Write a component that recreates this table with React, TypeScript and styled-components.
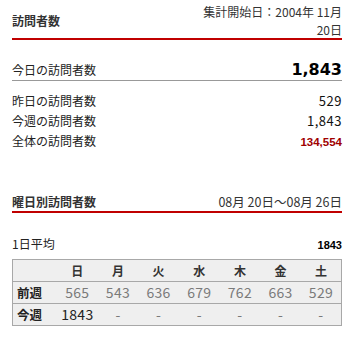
import React from "react";
import styled, { createGlobalStyle } from "styled-components";

const GlobalStyle = createGlobalStyle`
  html, body {
    margin: 0;
    padding: 0;
    background: #ffffff;
  }
  body {
    font-family: "Noto Sans CJK JP", "Noto Sans", sans-serif;
    color: #222;
  }
`;

const Page = styled.div`
  width: 330px;
  padding: 3px 8px 0 12px;
`;

const SectionHeader = styled.div<{ $top?: number }>`
  display: flex;
  justify-content: space-between;
  align-items: center;
  margin-top: ${({ $top }) => $top || 0}px;
  border-bottom: 2px solid #c00000;
`;

const SectionTitle = styled.div`
  font-size: 12px;
  font-weight: bold;
  line-height: 16px;
  color: #333;
`;

const SectionNote = styled.div<{ $tall?: boolean }>`
  font-size: ${({ $tall }) => ($tall ? "12px" : "12.5px")};
  line-height: ${({ $tall }) => ($tall ? "17.5px" : "16.5px")};
  text-align: right;
  color: #333;
`;

const TodayRow = styled.div`
  display: flex;
  justify-content: space-between;
  align-items: baseline;
  margin-top: 20px;
  height: 20px;
  border-bottom: 1px solid #999;
`;

const Label = styled.span`
  font-size: 12px;
  line-height: 20px;
  color: #222;
`;

const BigNumber = styled.span`
  font-family: "DejaVu Sans", sans-serif;
  font-size: 16px;
  font-weight: bold;
  color: #000;
`;

const StatList = styled.div`
  padding-top: 10px;
`;

const StatRow = styled.div`
  display: flex;
  justify-content: space-between;
  align-items: baseline;
  height: 20px;
`;

const StatValue = styled.span<{ $total?: boolean }>`
  font-family: ${({ $total }) =>
    $total ? '"Liberation Sans", Arial, sans-serif' : '"Noto Sans CJK JP", sans-serif'};
  font-size: ${({ $total }) => ($total ? "11.5px" : "13px")};
  font-weight: ${({ $total }) => ($total ? "bold" : "normal")};
  color: ${({ $total }) => ($total ? "#a00000" : "#111")};
  letter-spacing: ${({ $total }) => ($total ? "0" : "0.5px")};
`;

const AverageRow = styled.div`
  display: flex;
  justify-content: space-between;
  align-items: baseline;
  margin-top: 21px;
  line-height: 16px;
`;

const AverageValue = styled.span`
  font-family: "Liberation Sans", Arial, sans-serif;
  font-size: 11px;
  font-weight: bold;
  color: #000;
`;

const WeekTable = styled.table`
  width: 330px;
  margin-top: 5px;
  border-collapse: collapse;
  table-layout: fixed;
  background: #efefef;
  border: 1px solid #a8a8a8;
`;

const Row = styled.tr`
  height: 22px;
  & + & {
    border-top: 1px solid #a8a8a8;
  }
`;

const HeadCell = styled.th`
  padding: 0;
  font-size: 12px;
  font-weight: bold;
  color: #333;
  text-align: center;
`;

const RowLabel = styled.th`
  width: 40px;
  padding: 0 0 0 4px;
  font-size: 12.5px;
  font-weight: bold;
  color: #222;
  text-align: left;
`;

const Cell = styled.td<{ $dim?: boolean }>`
  padding: 0;
  font-size: 14px;
  text-align: center;
  letter-spacing: 0.3px;
  color: ${({ $dim }) => ($dim ? "#7a7a7a" : "#222")};
`;

const days = ["日", "月", "火", "水", "木", "金", "土"];
const lastWeek = [565, 543, 636, 679, 762, 663, 529];
const thisWeek = ["1843", "-", "-", "-", "-", "-", "-"];

const stats = [
  { label: "昨日の訪問者数", value: "529" },
  { label: "今週の訪問者数", value: "1,843" },
  { label: "全体の訪問者数", value: "134,554", total: true },
];

const App = () => {
  return (
    <>
      <GlobalStyle />
      <Page>
        <SectionHeader>
          <SectionTitle>訪問者数</SectionTitle>
          <SectionNote $tall>
            集計開始日：2004年 11月
            <br />
            20日
          </SectionNote>
        </SectionHeader>

        <TodayRow>
          <Label>今日の訪問者数</Label>
          <BigNumber>1,843</BigNumber>
        </TodayRow>

        <StatList>
          {stats.map((s) => (
            <StatRow key={s.label}>
              <Label>{s.label}</Label>
              <StatValue $total={s.total}>{s.value}</StatValue>
            </StatRow>
          ))}
        </StatList>

        <SectionHeader $top={43}>
          <SectionTitle>曜日別訪問者数</SectionTitle>
          <SectionNote>08月 20日〜08月 26日</SectionNote>
        </SectionHeader>

        <AverageRow>
          <Label>1日平均</Label>
          <AverageValue>1843</AverageValue>
        </AverageRow>

        <WeekTable>
          <tbody>
            <Row>
              <RowLabel />
              {days.map((d) => (
                <HeadCell key={d}>{d}</HeadCell>
              ))}
            </Row>
            <Row>
              <RowLabel>前週</RowLabel>
              {lastWeek.map((n, i) => (
                <Cell key={i} $dim>
                  {n}
                </Cell>
              ))}
            </Row>
            <Row>
              <RowLabel>今週</RowLabel>
              {thisWeek.map((n, i) => (
                <Cell key={i} $dim={n === "-"}>
                  {n}
                </Cell>
              ))}
            </Row>
          </tbody>
        </WeekTable>
      </Page>
    </>
  );
};

export default App;
